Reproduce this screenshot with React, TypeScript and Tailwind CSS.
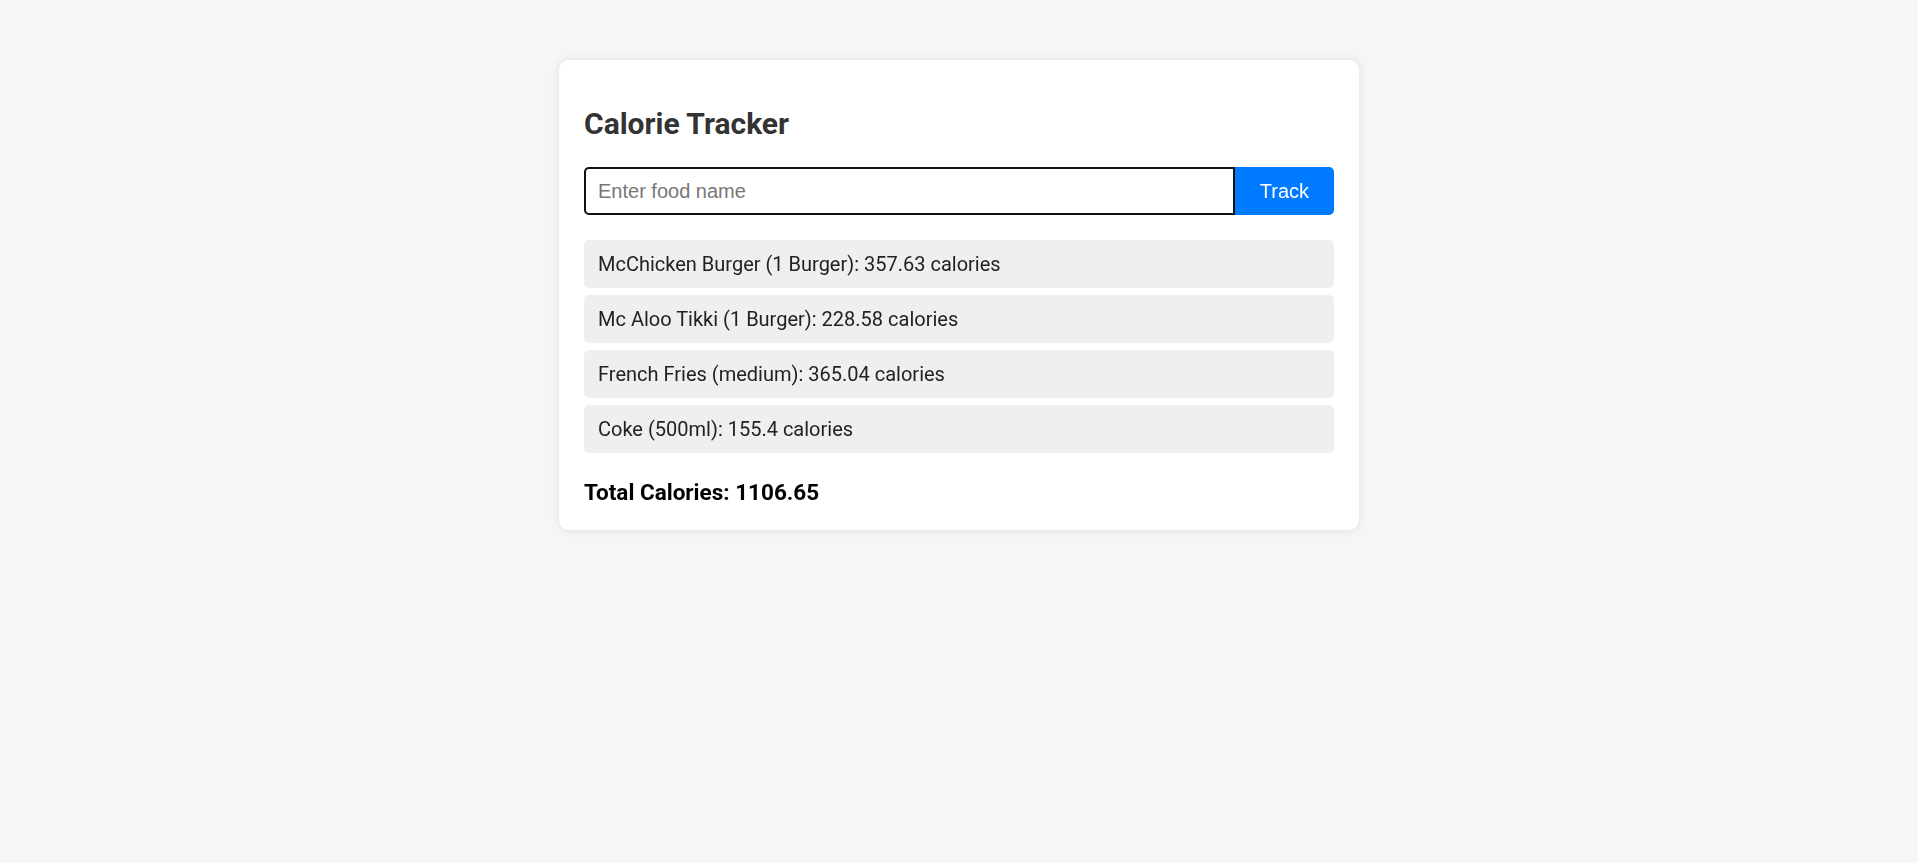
import { useState } from "react";

const items = [
  { name: "McChicken Burger (1 Burger)", cal: 357.63 },
  { name: "Mc Aloo Tikki (1 Burger)", cal: 228.58 },
  { name: "French Fries (medium)", cal: 365.04 },
  { name: "Coke (500ml)", cal: 155.4 },
];

export default function App() {
  const [food, setFood] = useState("");
  const total = items.reduce((s, i) => s + i.cal, 0);

  return (
    <div className="min-h-[863px] bg-[#f6f6f6] pt-[60px] font-['Roboto',sans-serif]">
      <div className="mx-auto w-[800px] rounded-[10px] bg-white px-[25px] pt-[46px] pb-[25px] shadow-[0_0_10px_rgba(0,0,0,0.1)]">
        <h1 className="text-[30px] font-bold leading-[35px] text-[#333]">Calorie Tracker</h1>
        <div className="mt-[26px] flex h-[48px]">
          <input
            autoFocus
            value={food}
            onChange={(e) => setFood(e.target.value)}
            placeholder="Enter food name"
            className="flex-1 rounded-l-[5px] border-2 border-[#111] px-[12px] font-['Liberation_Sans',Arial,sans-serif] text-[20px] text-black outline-none placeholder:text-[#777]"
          />
          <button className="w-[99px] rounded-r-[5px] bg-[#007bff] font-['Liberation_Sans',Arial,sans-serif] text-[20px] text-white">
            Track
          </button>
        </div>
        <ul className="mt-[25px] flex flex-col gap-[7px]">
          {items.map((i) => (
            <li key={i.name} className="flex h-[48px] items-center rounded-[5px] bg-[#efefef] px-[14px] text-[20px] text-[#222]">
              {i.name}: {i.cal} calories
            </li>
          ))}
        </ul>
        <p className="mt-[26px] text-[22.5px] font-bold leading-[26px] text-black">
          Total Calories: {total.toFixed(2)}
        </p>
      </div>
    </div>
  );
}
